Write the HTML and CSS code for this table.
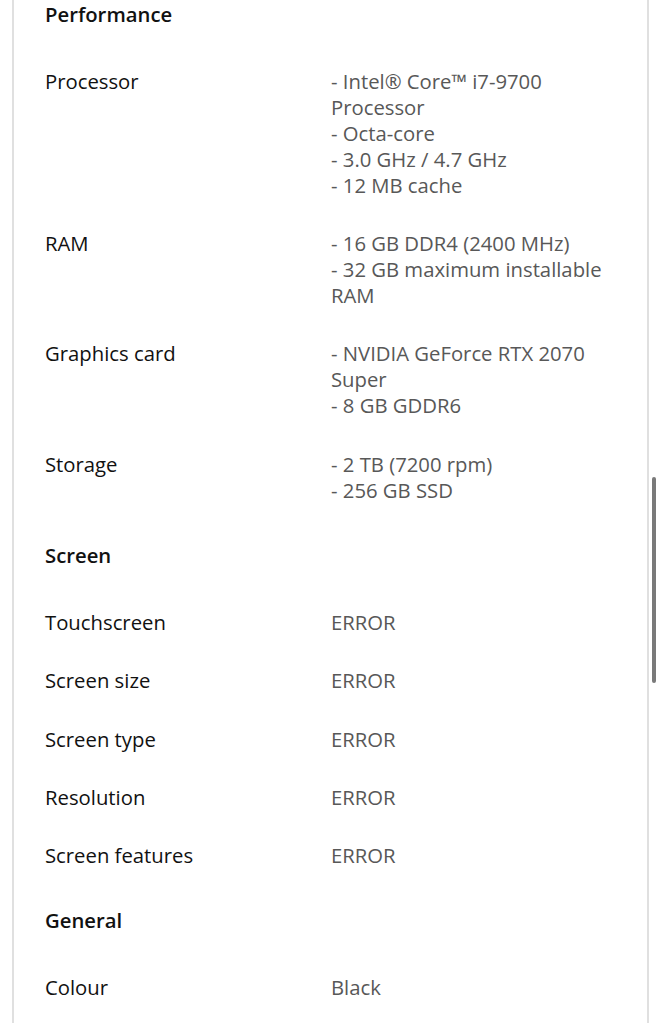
FILE: index.html
```html
<!DOCTYPE html>
<html lang="en">
<head>
<meta charset="utf-8">
<title>Specifications</title>
<link rel="stylesheet" href="styles.css">
</head>
<body>
<div class="page">
  <div class="card">
    <div class="section">Performance</div>
    <div class="row">
      <div class="label">Processor</div>
      <div class="value">- Intel® Core™ i7-9700<br>Processor<br>- Octa-core<br>- 3.0 GHz / 4.7 GHz<br>- 12 MB cache</div>
    </div>
    <div class="row">
      <div class="label">RAM</div>
      <div class="value">- 16 GB DDR4 (2400 MHz)<br>- 32 GB maximum installable<br>RAM</div>
    </div>
    <div class="row">
      <div class="label">Graphics card</div>
      <div class="value">- NVIDIA GeForce RTX 2070<br>Super<br>- 8 GB GDDR6</div>
    </div>
    <div class="row">
      <div class="label">Storage</div>
      <div class="value">- 2 TB (7200 rpm)<br>- 256 GB SSD</div>
    </div>
    <div class="section">Screen</div>
    <div class="row">
      <div class="label">Touchscreen</div>
      <div class="value">ERROR</div>
    </div>
    <div class="row">
      <div class="label">Screen size</div>
      <div class="value">ERROR</div>
    </div>
    <div class="row">
      <div class="label">Screen type</div>
      <div class="value">ERROR</div>
    </div>
    <div class="row">
      <div class="label">Resolution</div>
      <div class="value">ERROR</div>
    </div>
    <div class="row">
      <div class="label">Screen features</div>
      <div class="value">ERROR</div>
    </div>
    <div class="section">General</div>
    <div class="row">
      <div class="label">Colour</div>
      <div class="value">Black</div>
    </div>
  </div>
  <div class="scrollbar"></div>
</div>
</body>
</html>
```

FILE: styles.css
```css
html, body {
  margin: 0;
  padding: 0;
  background: #ffffff;
  overflow: hidden;
}
body {
  font-family: "Open Sans", "Noto Sans", sans-serif;
  font-size: 20.3px;
  line-height: 26px;
  color: #111111;
}
.page {
  position: relative;
  height: 1024px;
  overflow: hidden;
}
.card {
  margin: -22.5px 12px 0 12px;
  border-left: 2px solid #e0e0e0;
  border-right: 2px solid #e0e0e0;
  padding: 0 30px 6px 31px;
}
.section {
  font-weight: 600;
  padding: 23.4px 0 25px 0;
  color: #111111;
}
.row {
  display: grid;
  grid-template-columns: 1fr 1fr;
  padding: 16.1px 0;
}
.label {
  color: #111111;
}
.value {
  color: #585858;
}
.scrollbar {
  position: absolute;
  left: 652px;
  top: 477px;
  width: 4px;
  height: 206px;
  border-radius: 2px;
  background: #7a7a7a;
}
```
